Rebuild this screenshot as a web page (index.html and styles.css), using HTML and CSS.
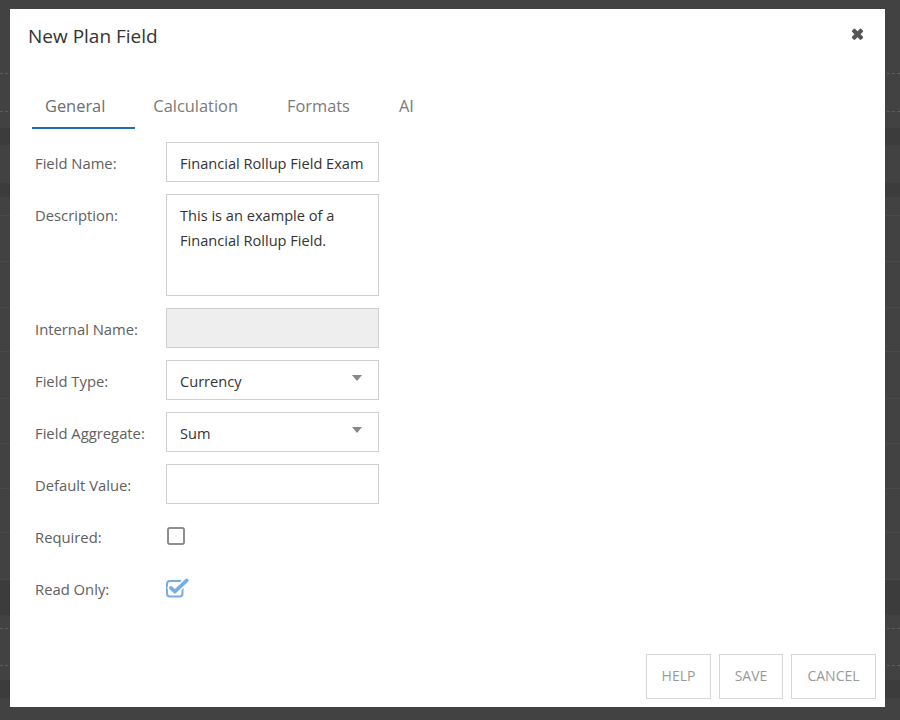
FILE: index.html
```html
<!DOCTYPE html>
<html>
<head>
<meta charset="utf-8">
<link rel="stylesheet" href="styles.css">
</head>
<body>
<div class="backdrop">
  <div class="bg-row r1 dashed"></div>
  <div class="bg-row r2 dashed"></div>
  <div class="bg-row r3"></div>
  <div class="bg-row band b17"></div>
  <div class="bg-row r38"></div>
  <div class="bg-row band b14"></div>
  <div class="bg-row r18 solid"></div>
  <div class="bg-row r46 solid"></div>
  <div class="bg-row r46 solid"></div>
  <div class="bg-row r44 solid"></div>
  <div class="bg-row r47 solid"></div>
  <div class="bg-row r45 solid"></div>
  <div class="bg-row r45 solid"></div>
  <div class="bg-row r44 solid"></div>
  <div class="bg-row r47 solid"></div>
  <div class="bg-row r35 band"></div>
  <div class="bg-row r14 dashed"></div>
  <div class="bg-row r37 dashed"></div>
  <div class="bg-row r14"></div>
  <div class="bg-row band b18"></div>
</div>

<div class="modal">
  <div class="modal-header">
    <h1 class="modal-title">New Plan Field</h1>
    <span class="close-btn" aria-label="Close">
      <svg width="15" height="14" viewBox="0 0 15 14">
        <path d="M2.2 3.4 L3.6 2 Q4.4 1.2 5.2 2 L7.5 4.3 L9.8 2 Q10.6 1.2 11.4 2 L12.8 3.4 Q13.6 4.2 12.8 5 L10.5 7.3 L12.8 9.6 Q13.6 10.4 12.8 11.2 L11.4 12.6 Q10.6 13.4 9.8 12.6 L7.5 10.3 L5.2 12.6 Q4.4 13.4 3.6 12.6 L2.2 11.2 Q1.4 10.4 2.2 9.6 L4.5 7.3 L2.2 5 Q1.4 4.2 2.2 3.4 Z" fill="#555"/>
      </svg>
    </span>
  </div>

  <div class="tabs">
    <div class="tab active">General</div>
    <div class="tab">Calculation</div>
    <div class="tab">Formats</div>
    <div class="tab">AI</div>
  </div>

  <div class="form">
    <label class="label">Field Name:</label>
    <div class="input"><span class="input-text">Financial Rollup Field Exam</span></div>

    <label class="label">Description:</label>
    <div class="input textarea">This is an example of a Financial Rollup Field.</div>

    <label class="label">Internal Name:</label>
    <div class="input disabled"></div>

    <label class="label">Field Type:</label>
    <div class="input select"><span class="input-text">Currency</span><span class="caret"></span></div>

    <label class="label">Field Aggregate:</label>
    <div class="input select"><span class="input-text">Sum</span><span class="caret"></span></div>

    <label class="label">Default Value:</label>
    <div class="input"></div>

    <label class="label">Required:</label>
    <div class="check-cell"><span class="checkbox"></span></div>

    <label class="label">Read Only:</label>
    <div class="check-cell">
      <svg class="checked" width="26" height="21" viewBox="0 0 26 21">
        <rect x="2" y="4" width="15.5" height="15.5" rx="3" fill="none" stroke="#76ade6" stroke-width="2"/>
        <path d="M5.8 10.8 L9.8 14.6 L21.8 3.4" fill="none" stroke="#fff" stroke-width="6.5" stroke-linecap="round" stroke-linejoin="round"/>
        <path d="M5.8 10.8 L9.8 14.6 L21.8 3.4" fill="none" stroke="#76ade6" stroke-width="3.6" stroke-linecap="round" stroke-linejoin="round"/>
      </svg>
    </div>
  </div>

  <div class="footer">
    <button class="btn btn-help">HELP</button>
    <button class="btn btn-save">SAVE</button>
    <button class="btn btn-cancel">CANCEL</button>
  </div>
</div>
</body>
</html>
```

FILE: styles.css
```css
html, body {
  margin: 0;
  padding: 0;
}
body {
  width: 900px;
  height: 720px;
  overflow: hidden;
  background: #3f3f3f;
  font-family: "Segoe UI", "Open Sans", "Noto Sans", sans-serif;
  position: relative;
}

.backdrop {
  display: flex;
  flex-direction: column;
  width: 900px;
  height: 720px;
  background: #424242;
}
.bg-row { flex: none; box-sizing: border-box; }
.r1 { height: 74px; }
.r2 { height: 38px; }
.r3 { height: 16px; }
.b17 { height: 17px; }
.r38 { height: 38px; }
.b14 { height: 14px; }
.r18 { height: 19px; }
.r46 { height: 46px; }
.r44 { height: 44px; }
.r47 { height: 47px; }
.r45 { height: 45px; }
.r35 { height: 35px; }
.r14 { height: 14px; }
.r37 { height: 37px; }
.b18 { height: 18px; }
.dashed { border-bottom: 1px dashed #5c5c5c; }
.solid { border-bottom: 1px solid #4a4a4a; }
.band { background: #3c3c3c; }

.modal {
  position: absolute;
  left: 10px;
  top: 9px;
  width: 875px;
  height: 698px;
  background: #fff;
  display: flex;
  flex-direction: column;
}

.modal-header {
  display: flex;
  justify-content: space-between;
  align-items: flex-start;
  padding: 14px 20px 0 18px;
  height: 62px;
  box-sizing: border-box;
}
.modal-title {
  margin: 0;
  font-size: 19px;
  font-weight: 400;
  color: #333;
  line-height: 26px;
}
.close-btn {
  display: block;
  margin-top: 4px;
  line-height: 0;
}

.tabs {
  display: flex;
  padding-left: 22px;
  gap: 5px;
  height: 58px;
  box-sizing: border-box;
  padding-top: 22px;
}
.tab {
  font-size: 16.4px;
  color: #7a7a7a;
  padding: 1px 31px 0 13px;
  height: 36px;
  line-height: 24px;
  box-sizing: border-box;
}
.tab.active {
  color: #6e6e6e;
  border-bottom: 2px solid #1f6db1;
  padding-right: 30px;
}

.form {
  flex: 1;
  display: grid;
  grid-template-columns: 131px 213px;
  grid-auto-rows: min-content;
  row-gap: 12px;
  padding: 13px 0 0 25px;
  align-content: start;
}
.label {
  font-size: 14.8px;
  color: #606060;
  line-height: 40px;
  padding-top: 1px;
  height: 40px;
  box-sizing: border-box;
  white-space: nowrap;
}
.input {
  box-sizing: border-box;
  height: 40px;
  border: 1px solid #cfcfcf;
  font-size: 14.6px;
  color: #333;
  padding: 1px 10px 0 13px;
  display: flex;
  align-items: center;
  overflow: hidden;
  white-space: nowrap;
}
.input-text {
  overflow: hidden;
  white-space: nowrap;
}
.textarea {
  height: 102px;
  display: block;
  white-space: normal;
  line-height: 25px;
  padding-top: 8px;
  padding-right: 30px;
}
.disabled {
  background: #eeeeee;
}
.select {
  justify-content: space-between;
  padding-right: 16px;
}
.caret {
  width: 0;
  height: 0;
  border-left: 5.5px solid transparent;
  border-right: 5.5px solid transparent;
  border-top: 6px solid #888;
  margin-top: -5px;
}
.check-cell {
  height: 40px;
  display: flex;
  align-items: center;
}
.checkbox {
  display: block;
  width: 18px;
  height: 18px;
  box-sizing: border-box;
  border: 2px solid #8e8e8e;
  border-radius: 3px;
  margin-left: 1px;
}
.checked {
  display: block;
  margin-left: -1px;
  margin-top: -1px;
}

.footer {
  display: flex;
  justify-content: flex-end;
  gap: 8px;
  padding: 0 9px 8px 0;
}
.btn {
  height: 45px;
  background: #fff;
  border: 1px solid #d6d6d6;
  color: #999;
  font-family: "Segoe UI", "Open Sans", "Noto Sans", sans-serif;
  font-size: 14px;
  padding: 0 0 2px;
  box-sizing: border-box;
  cursor: pointer;
}
.btn-help { width: 65px; }
.btn-save { width: 64px; }
.btn-cancel { width: 85px; }
```
